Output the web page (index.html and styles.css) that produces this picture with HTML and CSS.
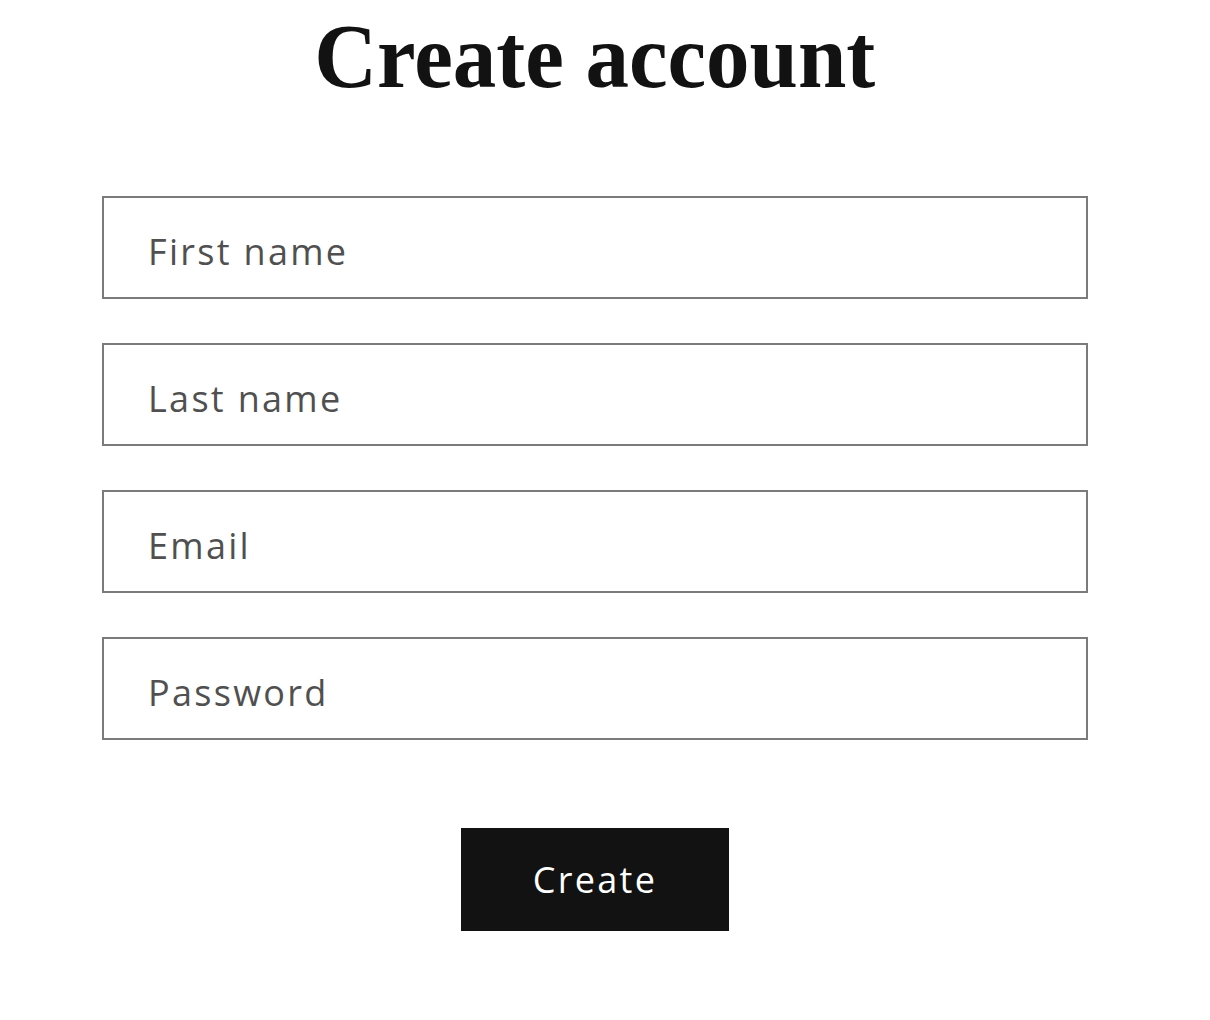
FILE: index.html
```html
<!DOCTYPE html>
<html>
<head>
<meta name="viewport" content="width=device-width, initial-scale=1">
<link rel="stylesheet" href="styles.css">
</head>
<body>

<div class="customer">
  <h1 class="title">Create account</h1>

  <form class="create-form" onsubmit="return false">
    <div class="field">
      <input type="text" id="FirstName" placeholder="First name">
    </div>
    <div class="field">
      <input type="text" id="LastName" placeholder="Last name">
    </div>
    <div class="field">
      <input type="email" id="Email" placeholder="Email">
    </div>
    <div class="field">
      <input type="password" id="Password" placeholder="Password">
    </div>

    <div class="actions">
      <button type="submit" class="btn">Create</button>
    </div>
  </form>
</div>

</body>
</html>
```

FILE: styles.css
```css
* {
  box-sizing: border-box;
}

body {
  margin: 0;
  background: #fff;
  color: #121212;
  font-family: "Open Sans", Lato, Arial, sans-serif;
}

/* Page wrapper, a bit off-center like the original */
.customer {
  width: 986px;
  margin-left: 102px;
  display: flex;
  flex-direction: column;
  align-items: center;
}

.title {
  margin: 10px 0 0 0;
  font-family: "Liberation Serif", "Times New Roman", serif;
  font-weight: bold;
  font-size: 92px;
  line-height: 1;
  color: #121212;
  transform: scaleX(0.945);
}

.create-form {
  width: 100%;
  margin-top: 94px;
  display: flex;
  flex-direction: column;
  gap: 44px;
}

.field input {
  display: block;
  width: 100%;
  height: 103px;
  margin: 0;
  padding: 7px 44px 0 44px;
  border: 2px solid #7b7b7b;
  border-radius: 0;
  background: #fff;
  font-family: inherit;
  font-size: 36px;
  letter-spacing: 2.3px;
  color: #121212;
  outline: none;
}

.field input::placeholder {
  color: #505050;
  opacity: 1;
}

/* Submit button */
.actions {
  display: flex;
  justify-content: center;
  margin-top: 44px;
}

.btn {
  width: 268px;
  height: 103px;
  border: 0;
  border-radius: 0;
  background: #121212;
  color: #fff;
  font-family: inherit;
  font-size: 36px;
  letter-spacing: 2.3px;
  cursor: pointer;
}
```
